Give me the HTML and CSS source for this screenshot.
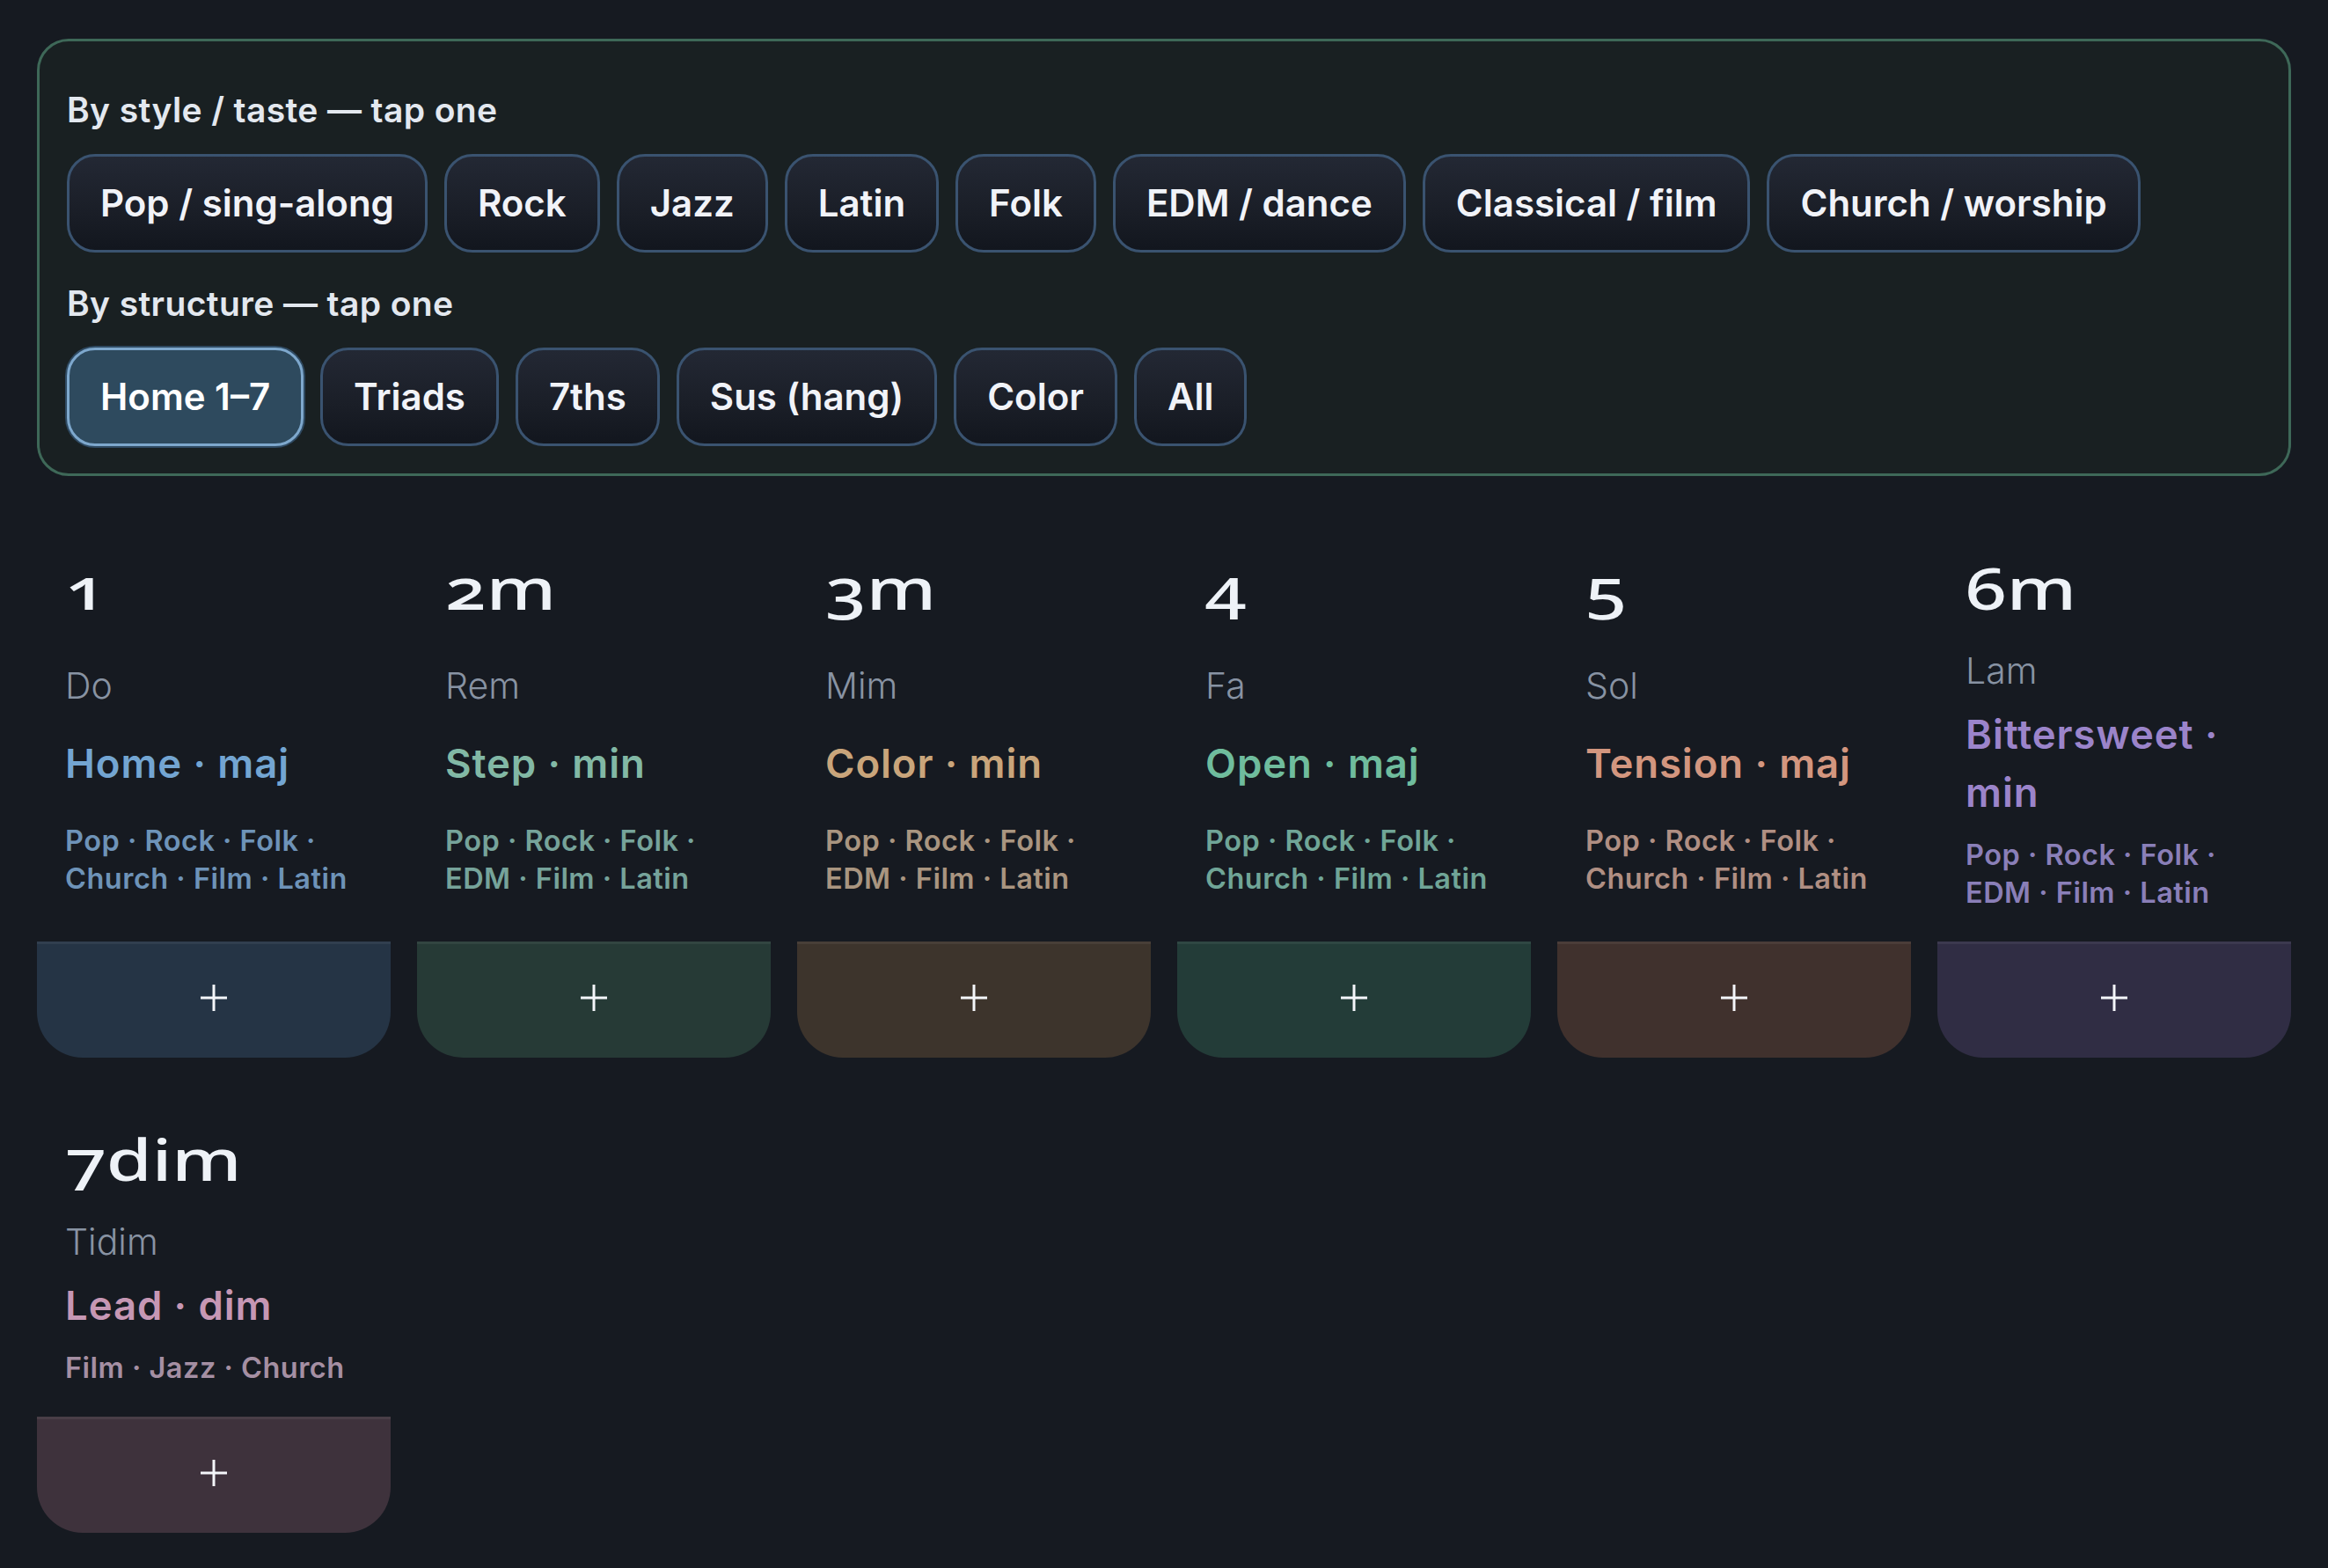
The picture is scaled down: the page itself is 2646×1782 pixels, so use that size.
FILE: index.html
```html
<!DOCTYPE html>
<html lang="en">
<head>
<meta charset="utf-8">
<title>Chord picker</title>
<link rel="stylesheet" href="styles.css">
</head>
<body>
<div class="page">
  <section class="filters">
    <div class="label">By style / taste — tap one</div>
    <div class="chips">
      <button class="chip">Pop / sing-along</button>
      <button class="chip">Rock</button>
      <button class="chip">Jazz</button>
      <button class="chip">Latin</button>
      <button class="chip">Folk</button>
      <button class="chip">EDM / dance</button>
      <button class="chip">Classical / film</button>
      <button class="chip">Church / worship</button>
    </div>
    <div class="label">By structure — tap one</div>
    <div class="chips">
      <button class="chip active">Home 1–7</button>
      <button class="chip">Triads</button>
      <button class="chip">7ths</button>
      <button class="chip">Sus (hang)</button>
      <button class="chip">Color</button>
      <button class="chip">All</button>
    </div>
  </section>

  <section class="grid">
    <div class="card c1">
      <div class="num">1</div>
      <div class="name">Do</div>
      <div class="role">Home · maj</div>
      <div class="tags">Pop · Rock · Folk · Church · Film · Latin</div>
      <button class="add"><svg viewBox="0 0 32 32" width="32" height="32"><path d="M16 1v30M1 16h30" stroke="#f4f6fa" stroke-width="3" fill="none"/></svg></button>
    </div>
    <div class="card c2">
      <div class="num">2m</div>
      <div class="name">Rem</div>
      <div class="role">Step · min</div>
      <div class="tags">Pop · Rock · Folk · EDM · Film · Latin</div>
      <button class="add"><svg viewBox="0 0 32 32" width="32" height="32"><path d="M16 1v30M1 16h30" stroke="#f4f6fa" stroke-width="3" fill="none"/></svg></button>
    </div>
    <div class="card c3">
      <div class="num">3m</div>
      <div class="name">Mim</div>
      <div class="role">Color · min</div>
      <div class="tags">Pop · Rock · Folk · EDM · Film · Latin</div>
      <button class="add"><svg viewBox="0 0 32 32" width="32" height="32"><path d="M16 1v30M1 16h30" stroke="#f4f6fa" stroke-width="3" fill="none"/></svg></button>
    </div>
    <div class="card c4">
      <div class="num">4</div>
      <div class="name">Fa</div>
      <div class="role">Open · maj</div>
      <div class="tags">Pop · Rock · Folk · Church · Film · Latin</div>
      <button class="add"><svg viewBox="0 0 32 32" width="32" height="32"><path d="M16 1v30M1 16h30" stroke="#f4f6fa" stroke-width="3" fill="none"/></svg></button>
    </div>
    <div class="card c5">
      <div class="num">5</div>
      <div class="name">Sol</div>
      <div class="role">Tension · maj</div>
      <div class="tags">Pop · Rock · Folk · Church · Film · Latin</div>
      <button class="add"><svg viewBox="0 0 32 32" width="32" height="32"><path d="M16 1v30M1 16h30" stroke="#f4f6fa" stroke-width="3" fill="none"/></svg></button>
    </div>
    <div class="card c6">
      <div class="num">6m</div>
      <div class="name">Lam</div>
      <div class="role">Bittersweet · min</div>
      <div class="tags">Pop · Rock · Folk · EDM · Film · Latin</div>
      <button class="add"><svg viewBox="0 0 32 32" width="32" height="32"><path d="M16 1v30M1 16h30" stroke="#f4f6fa" stroke-width="3" fill="none"/></svg></button>
    </div>
    <div class="card c7">
      <div class="num">7dim</div>
      <div class="name">Tidim</div>
      <div class="role">Lead · dim</div>
      <div class="tags">Film · Jazz · Church</div>
      <button class="add"><svg viewBox="0 0 32 32" width="32" height="32"><path d="M16 1v30M1 16h30" stroke="#f4f6fa" stroke-width="3" fill="none"/></svg></button>
    </div>
  </section>
</div>
</body>
</html>
```
FILE: styles.css
```css
* { box-sizing: border-box; }

html, body {
  margin: 0;
  background: #161a21;
}

body {
  font-family: Inter, "Noto Sans", "Liberation Sans", sans-serif;
  color: #e6eaf0;
}

.page {
  padding: 44px 42px 42px;
}

.filters {
  border: 3px solid #3e6858;
  border-radius: 36px;
  background: #192022;
  padding: 56px 31px 31px;
  display: flex;
  flex-direction: column;
}

.label {
  font-size: 39px;
  line-height: 44px;
  font-weight: 600;
  letter-spacing: 0.01em;
  color: #e3e8ef;
}

.label + .chips { margin-top: 28px; }
.chips + .label { margin-top: 36px; }

.chips {
  display: flex;
  flex-wrap: wrap;
  gap: 19px;
}

.chip {
  font-family: inherit;
  height: 112px;
  padding: 0 35px;
  border: 3px solid #3a5370;
  border-radius: 32px;
  background: linear-gradient(180deg, #232834 0%, #1a1e27 60%, #12161e 100%);
  color: #f1f3f8;
  font-size: 42px;
  font-weight: 600;
  line-height: 1;
}

.chip.active {
  background: #2e4a5e;
  border-color: #7ea8cd;
  box-shadow: 0 0 0 2px #2f4a62;
  color: #ffffff;
}

.grid {
  margin-top: 60px;
  display: grid;
  grid-template-columns: repeat(6, 1fr);
  column-gap: 30px;
  row-gap: 48px;
}

.card {
  display: flex;
  flex-direction: column;
  justify-content: space-between;
  padding-top: 33px;
}

.num, .name, .role, .tags {
  padding: 0 32px;
}

.num {
  font-family: "Noto Sans", "DejaVu Sans", sans-serif;
  font-variant-numeric: oldstyle-nums;
  font-size: 66px;
  line-height: 66px;
  font-weight: 500;
  color: #eef2f7;
  transform: scaleX(1.27);
  transform-origin: 32px 50%;
}

.name {
  margin-top: 36px;
  font-size: 41px;
  line-height: 52px;
  font-weight: 300;
  color: #8893a3;
}

.role {
  margin-top: 14px;
  font-size: 45.5px;
  line-height: 66px;
  font-weight: 600;
  letter-spacing: 0.02em;
}

.tags {
  margin-top: 16px;
  font-size: 32.5px;
  line-height: 43px;
  font-weight: 600;
  letter-spacing: 0.015em;
}

.add {
  margin-top: 34px;
  height: 132px;
  width: 100%;
  border: 0;
  border-top: 3px solid rgba(255, 255, 255, 0.06);
  border-radius: 0 0 52px 52px;
  display: flex;
  align-items: center;
  justify-content: center;
  padding: 0 0 8px;
}

.c1 .role { color: #73a5d2; }
.c1 .tags { color: #6e93b8; }
.c1 .add { background: #253445; }

.c2 .role { color: #82b8a5; }
.c2 .tags { color: #76a39a; }
.c2 .add { background: #263a36; }

.c3 .role { color: #c9a57b; }
.c3 .tags { color: #a99580; }
.c3 .add { background: #3d342c; }

.c4 .role { color: #6fbc9d; }
.c4 .tags { color: #70a597; }
.c4 .add { background: #233c38; }

.c5 .role { color: #d3967f; }
.c5 .tags { color: #b08f83; }
.c5 .add { background: #40312d; }

.c6 .role { color: #9b84ca; }
.c6 .tags { color: #8a7fb8; }
.c6 .add { background: #302d44; }

.c7 .role { color: #c697b4; }
.c7 .tags { color: #a58fa3; }
.c7 .add { background: #3e323c; }
```
